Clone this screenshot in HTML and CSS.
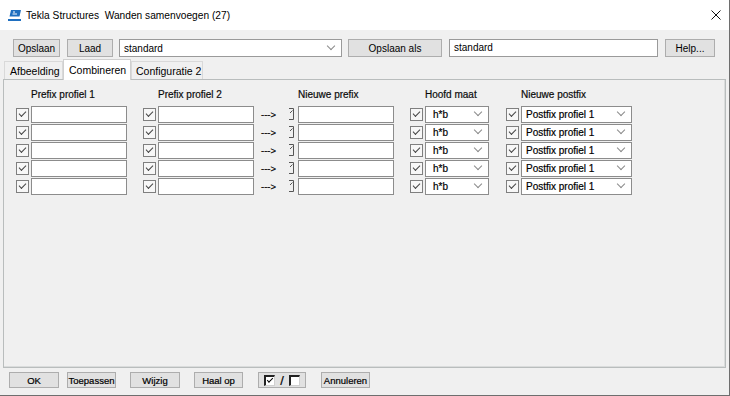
FILE: index.html
```html
<!DOCTYPE html>
<html lang="nl">
<head>
    <meta charset="UTF-8">
    <meta name="viewport" content="width=device-width, initial-scale=1.0">
    <title>Wanden samenvoegen</title>
    <link rel="stylesheet" href="styles.css">
</head>
<body>
<div class="window">
    <!-- Title bar -->
    <div class="titlebar">
        <svg class="app-icon" width="15" height="14" viewBox="0 0 15 14">
            <path d="M4 2H14L12.5 8.5H2.5Z" fill="#1f6fc0"/>
            <path d="M6 4H8M5.5 6H10" stroke="#ffffff" stroke-width="1"/>
            <rect x="1" y="11" width="13" height="2" fill="#1f6fc0"/>
        </svg>
        <span class="title">Tekla Structures&nbsp; Wanden samenvoegen (27)</span>
        <svg class="close" width="10" height="10" viewBox="0 0 10 10">
            <path d="M0.5 0.5L9.5 9.5M9.5 0.5L0.5 9.5" stroke="#111" stroke-width="1"/>
        </svg>
    </div>

    <!-- Top toolbar -->
    <div class="toolbar">
        <button class="btn btn-save">Opslaan</button>
        <button class="btn btn-load">Laad</button>
        <div class="combo combo-set"><span>standard</span><i class="chev"></i></div>
        <button class="btn btn-saveas">Opslaan als</button>
        <div class="textbox textbox-name">standard</div>
        <button class="btn btn-help">Help...</button>
    </div>

    <!-- Tabs -->
    <div class="tabs">
        <div class="tab tab-afb">Afbeelding</div>
        <div class="tab tab-comb active">Combineren</div>
        <div class="tab tab-conf">Configuratie 2</div>
    </div>

    <div class="panel">
        <div class="headers">
            <span class="h h1">Prefix profiel 1</span>
            <span class="h h2">Prefix profiel 2</span>
            <span class="h h3">Nieuwe prefix</span>
            <span class="h h4">Hoofd maat</span>
            <span class="h h5">Nieuwe postfix</span>
        </div>

        <div class="row">
            <span class="cb"></span><span class="field"></span>
            <span class="cb gap"></span><span class="field"></span>
            <span class="arrow">---&gt;</span>
            <svg class="edit" width="7" height="12" viewBox="0 0 7 12"><path d="M1 0.5H5.5V11.5H1" fill="none" stroke="#555"/><path d="M2 5L4.5 2.5" stroke="#555"/></svg>
            <span class="field field-new"></span>
            <span class="cb gap"></span><span class="combo combo-size"><span>h*b</span><i class="chev"></i></span>
            <span class="cb gap-post"></span><span class="combo combo-post"><span>Postfix profiel 1</span><i class="chev"></i></span>
        </div>
        <div class="row">
            <span class="cb"></span><span class="field"></span>
            <span class="cb gap"></span><span class="field"></span>
            <span class="arrow">---&gt;</span>
            <svg class="edit" width="7" height="12" viewBox="0 0 7 12"><path d="M1 0.5H5.5V11.5H1" fill="none" stroke="#555"/><path d="M2 5L4.5 2.5" stroke="#555"/></svg>
            <span class="field field-new"></span>
            <span class="cb gap"></span><span class="combo combo-size"><span>h*b</span><i class="chev"></i></span>
            <span class="cb gap-post"></span><span class="combo combo-post"><span>Postfix profiel 1</span><i class="chev"></i></span>
        </div>
        <div class="row">
            <span class="cb"></span><span class="field"></span>
            <span class="cb gap"></span><span class="field"></span>
            <span class="arrow">---&gt;</span>
            <svg class="edit" width="7" height="12" viewBox="0 0 7 12"><path d="M1 0.5H5.5V11.5H1" fill="none" stroke="#555"/><path d="M2 5L4.5 2.5" stroke="#555"/></svg>
            <span class="field field-new"></span>
            <span class="cb gap"></span><span class="combo combo-size"><span>h*b</span><i class="chev"></i></span>
            <span class="cb gap-post"></span><span class="combo combo-post"><span>Postfix profiel 1</span><i class="chev"></i></span>
        </div>
        <div class="row">
            <span class="cb"></span><span class="field"></span>
            <span class="cb gap"></span><span class="field"></span>
            <span class="arrow">---&gt;</span>
            <svg class="edit" width="7" height="12" viewBox="0 0 7 12"><path d="M1 0.5H5.5V11.5H1" fill="none" stroke="#555"/><path d="M2 5L4.5 2.5" stroke="#555"/></svg>
            <span class="field field-new"></span>
            <span class="cb gap"></span><span class="combo combo-size"><span>h*b</span><i class="chev"></i></span>
            <span class="cb gap-post"></span><span class="combo combo-post"><span>Postfix profiel 1</span><i class="chev"></i></span>
        </div>
        <div class="row">
            <span class="cb"></span><span class="field"></span>
            <span class="cb gap"></span><span class="field"></span>
            <span class="arrow">---&gt;</span>
            <svg class="edit" width="7" height="12" viewBox="0 0 7 12"><path d="M1 0.5H5.5V11.5H1" fill="none" stroke="#555"/><path d="M2 5L4.5 2.5" stroke="#555"/></svg>
            <span class="field field-new"></span>
            <span class="cb gap"></span><span class="combo combo-size"><span>h*b</span><i class="chev"></i></span>
            <span class="cb gap-post"></span><span class="combo combo-post"><span>Postfix profiel 1</span><i class="chev"></i></span>
        </div>
    </div>

    <!-- Bottom buttons -->
    <div class="footer">
        <button class="fbtn f-ok">OK</button>
        <button class="fbtn f-apply">Toepassen</button>
        <button class="fbtn f-edit">Wijzig</button>
        <button class="fbtn f-get">Haal op</button>
        <button class="fbtn f-toggle"><span class="mini checked"></span><span class="slash">/</span><span class="mini"></span></button>
        <button class="fbtn f-cancel">Annuleren</button>
    </div>
</div>
</body>
</html>
```

FILE: styles.css
```css
/* General */
body {
    margin: 0;
    padding: 0;
    font-family: "Liberation Sans", Arial, sans-serif;
    font-size: 10px;
    color: #000;
}

.window {
    width: 730px;
    height: 396px;
    box-sizing: border-box;
    background-color: #f0f0f0;
    border-right: 1px solid #6e6e6e;
    border-bottom: 1px solid #6e6e6e;
    display: flex;
    flex-direction: column;
}

/* Title bar */
.titlebar {
    height: 30px;
    flex-shrink: 0;
    background-color: #fff;
    display: flex;
    align-items: center;
    padding-left: 7px;
}

.app-icon {
    margin-right: 4px;
}

.title {
    font-size: 10.2px;
}

.close {
    margin-left: auto;
    margin-right: 8px;
}

/* Buttons and boxes */
.btn,
.fbtn {
    font-family: inherit;
    font-size: 10px;
    color: #000;
    background-color: #e1e1e1;
    border: 1px solid #adadad;
    padding: 0;
    margin: 0;
    box-sizing: border-box;
    white-space: nowrap;
}

.toolbar {
    display: flex;
    padding: 9px 0 0 13px;
    height: 18px;
}

.toolbar > * {
    height: 18px;
    box-sizing: border-box;
}

.btn-save { width: 47px; }
.btn-load { width: 46px; margin-left: 7px; }
.combo-set { width: 223px; margin-left: 6px; }
.btn-saveas { width: 94px; margin-left: 6px; }
.textbox-name { width: 209px; margin-left: 7px; }
.btn-help { width: 50px; margin-left: 7px; }

.textbox {
    background-color: #fff;
    border: 1px solid #9a9a9a;
    padding: 2px 0 0 4px;
    font-size: 10px;
}

.combo {
    background-color: #fff;
    border: 1px solid #9a9a9a;
    display: flex;
    align-items: center;
    justify-content: space-between;
    padding: 0 7px 0 4px;
    box-sizing: border-box;
    white-space: nowrap;
}

.chev {
    width: 5px;
    height: 5px;
    border-right: 1px solid #8a8a8a;
    border-bottom: 1px solid #8a8a8a;
    transform: rotate(45deg);
    margin-top: -4px;
}

/* Tabs */
.tabs {
    display: flex;
    align-items: flex-end;
    height: 18px;
    margin-top: 4px;
    padding-left: 4px;
}

.tab {
    height: 18px;
    box-sizing: border-box;
    border: 1px solid #d9d9d9;
    border-bottom: none;
    font-size: 10.5px;
    padding: 3px 0 0 5px;
    white-space: nowrap;
}

.tab-afb { width: 59px; }
.tab-comb { width: 68px; }
.tab-conf { width: 72px; padding-left: 4px; }

.tab.active {
    height: 21px;
    margin-bottom: -1px;
    background-color: #fff;
    border-color: #d0d0d0;
    padding-top: 4px;
    position: relative;
    z-index: 1;
}

/* Tab panel */
.panel {
    margin: 0 3px;
    height: 289px;
    box-sizing: border-box;
    border: 1px solid #b9bdbd;
    box-shadow: inset -1px -1px 0 #dadcdc;
    padding-top: 8px;
    flex-shrink: 0;
}

.panel,
.footer {
    -webkit-text-stroke: 0.2px #000;
}

.headers {
    display: flex;
    height: 14px;
    padding-left: 27px;
    margin-bottom: 3px;
    line-height: 14px;
    color: #111;
}

.h1 { width: 127px; }
.h2 { width: 140px; }
.h3 { width: 127px; }
.h4 { width: 96px; }

.row {
    display: flex;
    align-items: center;
    height: 18px;
    padding-left: 12px;
}

.cb {
    width: 13px;
    height: 13px;
    box-sizing: border-box;
    border: 1px solid #7f7f7f;
    background-color: #f7f7f7;
    display: flex;
    justify-content: center;
    align-items: center;
    margin-right: 2px;
}

.cb::after {
    content: "";
    width: 6px;
    height: 3px;
    border-left: 1px solid #444;
    border-bottom: 1px solid #444;
    transform: rotate(-45deg);
    margin-top: -2px;
}

.cb.gap { margin-left: 16px; }
.cb.gap-post { margin-left: 17px; }

.field {
    width: 96px;
    height: 17px;
    box-sizing: border-box;
    background-color: #fff;
    border: 1px solid #8c8c8c;
}

.arrow {
    width: 27px;
    margin-left: 7px;
    font-size: 9.5px;
}

.edit {
    width: 7px;
}

.field-new { margin-left: 3px; }

.row .combo {
    height: 17px;
    border-color: #8c8c8c;
}

.combo-size { width: 64px; padding-left: 7px; }
.combo-post { width: 111px; }

/* Footer */
.footer {
    display: flex;
    padding-top: 4px;
}

.fbtn {
    height: 16px;
    font-size: 9.5px;
}

.f-ok { width: 50px; margin-left: 9px; }
.f-apply { width: 49px; margin-left: 8px; }
.f-edit { width: 50px; margin-left: 14px; }
.f-get { width: 49px; margin-left: 14px; }
.f-toggle {
    width: 48px;
    margin-left: 15px;
    display: flex;
    align-items: center;
    justify-content: center;
}
.f-cancel { width: 49px; margin-left: 15px; }

.mini {
    width: 11px;
    height: 11px;
    box-sizing: border-box;
    background-color: #fff;
    border-top: 2px solid #222;
    border-left: 2px solid #222;
    border-right: 1px solid #d0d0d0;
    border-bottom: 1px solid #d0d0d0;
    display: flex;
    justify-content: center;
    align-items: center;
}

.mini.checked::after {
    content: "";
    width: 5px;
    height: 2px;
    border-left: 1.5px solid #000;
    border-bottom: 1.5px solid #000;
    transform: rotate(-45deg);
    margin-top: -2px;
}

.slash {
    font-size: 13px;
    margin: 0 5px;
}
```
